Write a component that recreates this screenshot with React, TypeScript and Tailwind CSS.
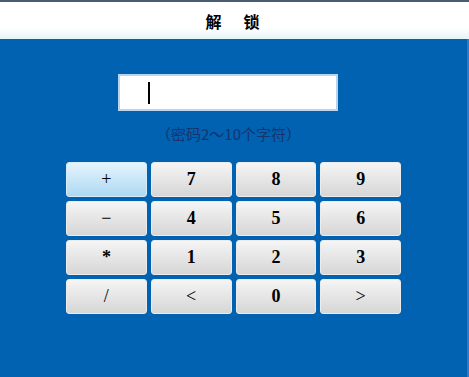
const keys = ["+", "7", "8", "9", "−", "4", "5", "6", "*", "1", "2", "3", "/", "<", "0", ">"]

export default function App() {
  return (
    <div className="flex h-[377px] w-[469px] flex-col overflow-hidden bg-[#0062b0]">
      {/* title bar */}
      <div className="flex h-[39px] shrink-0 items-center justify-center border-t-2 border-[#4b5d73] bg-gradient-to-b from-white from-70% to-[#e6f4f8]">
        <span
          className="pl-[18px] text-[16px] font-bold tracking-[22px] text-black"
          style={{ fontFamily: '"Noto Sans CJK SC", sans-serif' }}
        >
          解锁
        </span>
      </div>

      {/* body */}
      <div className="flex flex-1 flex-col border-r-2 border-[#2f7cc4] pt-[35px]">
        <div className="ml-[118px] flex h-[37px] w-[220px] items-center border-2 border-[#b8d4ee] bg-white pl-[28px]">
          <div className="h-[22px] w-[2px] bg-black" />
        </div>

        <div
          className="ml-[156px] mt-[13px] h-[20px] text-[15px] leading-[20px] text-[#16346f]"
          style={{ fontFamily: '"Noto Sans CJK SC", sans-serif' }}
        >
          （密码2～10个字符）
        </div>

        <div className="ml-[66px] mt-[18px] grid w-[335px] grid-cols-4 gap-[4px]">
          {keys.map((k, i) => (
            <button
              key={i}
              className={
                i === 0
                  ? "flex h-[35px] items-center justify-center rounded-[3px] border border-[#d6ecf8] bg-gradient-to-b from-[#e4f4fc] to-[#aed9f3] text-[18px] text-black"
                  : "flex h-[35px] items-center justify-center rounded-[3px] border border-[#ececec] bg-gradient-to-b from-[#f5f5f5] to-[#d6d6d6] text-[18px] text-black"
              }
              style={{ fontFamily: '"Liberation Serif", "DejaVu Serif", serif' }}
            >
              <span className={k === "*" || /[0-9]/.test(k) ? "font-bold" : "font-normal"}>{k}</span>
            </button>
          ))}
        </div>
      </div>
    </div>
  )
}
